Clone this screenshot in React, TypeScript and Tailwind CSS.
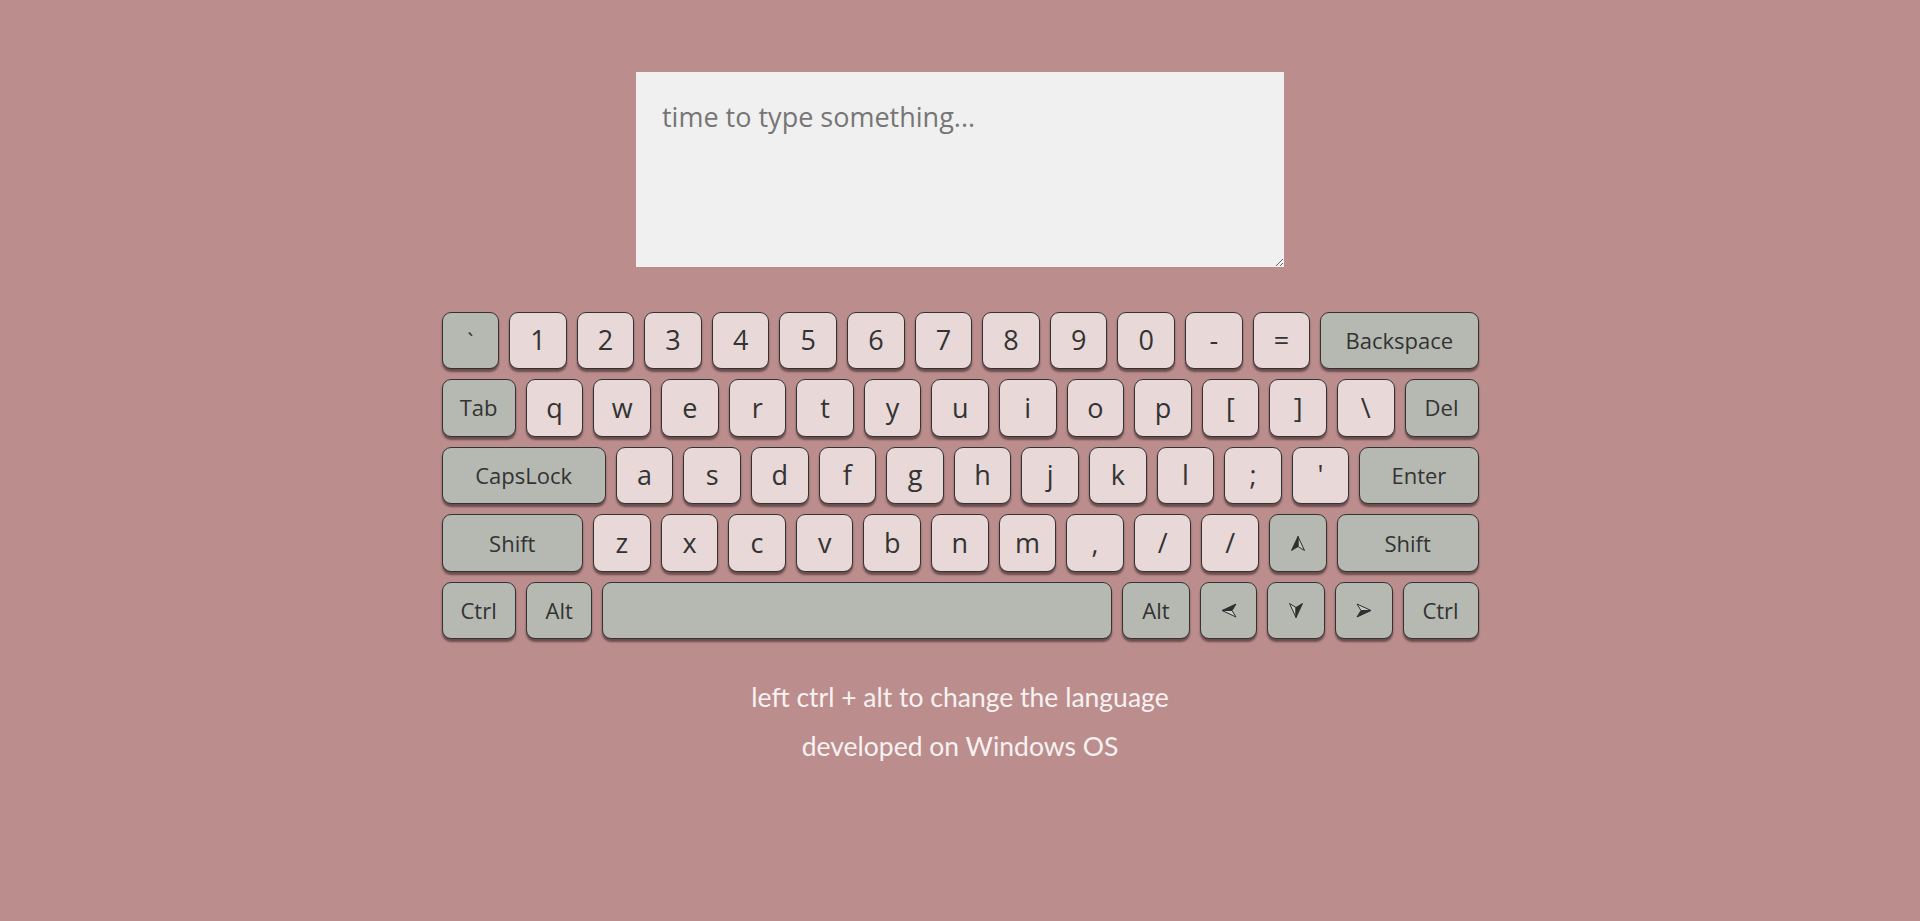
import React from "react";

type K = { label?: React.ReactNode; w?: string; special?: boolean; grow?: boolean };

const Arrow = ({ dir }: { dir: "up" | "down" | "left" | "right" }) => {
  const light = "M15 7.5 L1 1 L5 7.5 Z";
  const dark = "M15 7.5 L5 7.5 L1 14 Z";
  let transform = "";
  let lightP = light;
  let darkP = dark;
  if (dir === "up") {
    transform = "rotate(-90 8 7.5)";
    lightP = dark;
    darkP = light;
  } else if (dir === "down") {
    transform = "rotate(90 8 7.5)";
    lightP = dark;
    darkP = light;
  } else if (dir === "left") {
    transform = "rotate(180 8 7.5)";
    lightP = light;
    darkP = dark;
  }
  return (
    <svg width="16" height="15" viewBox="0 0 16 15">
      <g transform={transform}>
        <path d={lightP} fill="#c9ccc6" stroke="#2f2f2f" strokeWidth="1" strokeLinejoin="miter" />
        <path d={darkP} fill="#2f2f2f" stroke="#2f2f2f" strokeWidth="1" strokeLinejoin="miter" />
      </g>
    </svg>
  );
};

const Key = ({ label, w, special, grow }: K) => (
  <div
    className={
      "h-[57.6px] shrink-0 flex items-center justify-center rounded-[9px] border border-[#333333] text-[#333333] shadow-[0_3px_2px_rgba(40,25,25,0.55)] " +
      (special ? "bg-[#b5b9b1] text-[22px] " : "bg-[#e8d8d8] text-[27px] ") +
      (grow ? "flex-1 " : "") +
      (w ?? "w-[57.6px]")
    }
    style={{ fontFamily: "'Open Sans', 'Noto Sans', sans-serif" }}
  >
    {label}
  </div>
);

const chars = (s: string[]) => s.map((c) => ({ label: c }));

const rows: K[][] = [
  [
    { label: "`", special: true },
    ...chars(["1", "2", "3", "4", "5", "6", "7", "8", "9", "0", "-", "="]),
    { label: "Backspace", special: true, grow: true },
  ],
  [
    { label: "Tab", special: true, w: "w-[74.3px]" },
    ...chars(["q", "w", "e", "r", "t", "y", "u", "i", "o", "p", "[", "]", "\\"]),
    { label: "Del", special: true, grow: true },
  ],
  [
    { label: "CapsLock", special: true, w: "w-[164.3px]" },
    ...chars(["a", "s", "d", "f", "g", "h", "j", "k", "l", ";", "'"]),
    { label: "Enter", special: true, grow: true },
  ],
  [
    { label: "Shift", special: true, w: "w-[141.6px]" },
    ...chars(["z", "x", "c", "v", "b", "n", "m", ",", "/", "/"]),
    { label: <Arrow dir="up" />, special: true },
    { label: "Shift", special: true, grow: true },
  ],
  [
    { label: "Ctrl", special: true, w: "w-[74.3px]" },
    { label: "Alt", special: true, w: "w-[66.7px]" },
    { label: "", special: true, grow: true },
    { label: "Alt", special: true, w: "w-[67.4px]" },
    { label: <Arrow dir="left" />, special: true },
    { label: <Arrow dir="down" />, special: true },
    { label: <Arrow dir="right" />, special: true },
    { label: "Ctrl", special: true, w: "w-[76px]" },
  ],
];

export default function App() {
  return (
    <div className="min-h-screen w-full bg-[#bc8d8d] flex flex-col items-center pt-[72px]">
      <textarea
        placeholder="time to type something..."
        className="w-[648px] h-[195px] bg-[#f0f0f0] border-0 outline-none pl-[26px] pt-[27px] pr-4 text-[27px] leading-[36px] text-[#333] placeholder:text-[#767676]"
        style={{ fontFamily: "'Open Sans', 'Noto Sans', sans-serif" }}
      />
      <div className="mt-[44.5px] w-[1037px] flex flex-col gap-[10px]">
        {rows.map((r, i) => (
          <div key={i} className="flex gap-[10px] w-full">
            {r.map((k, j) => (
              <Key key={j} {...k} />
            ))}
          </div>
        ))}
      </div>
      <div
        className="mt-[34px] flex flex-col items-center text-[#f7f2f2] text-[26.5px] leading-[49px]"
        style={{ fontFamily: "Lato, 'Noto Sans', sans-serif" }}
      >
        <p>left ctrl + alt to change the language</p>
        <p>developed on Windows OS</p>
      </div>
    </div>
  );
}
